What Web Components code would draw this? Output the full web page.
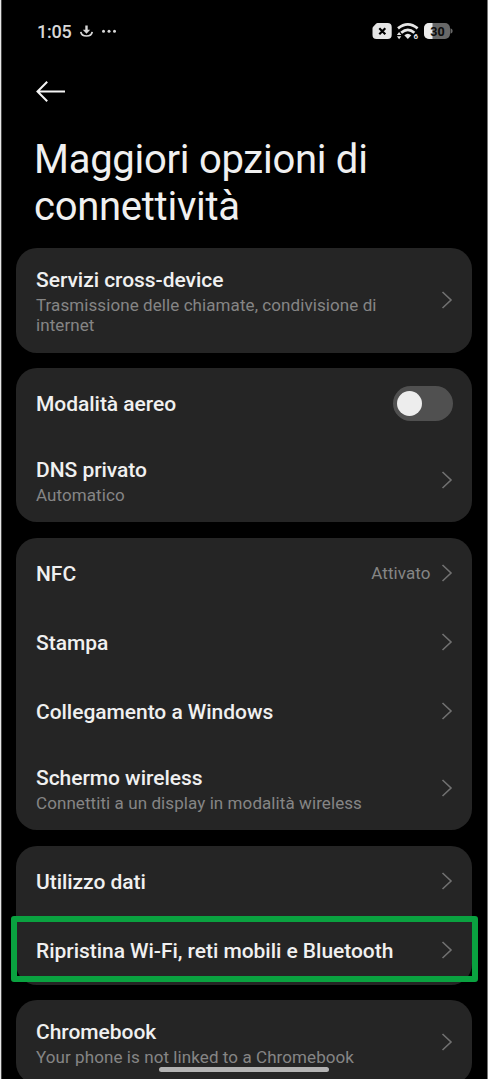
<!DOCTYPE html>
<html lang="it">
<head>
<meta charset="utf-8">
<title>Maggiori opzioni di connettività</title>
<style>
html,body{margin:0;height:100%;overflow:hidden;background:#000}
body{font-family:Roboto,"Noto Sans",sans-serif;color:#f0f0f0}
</style>
</head>
<body>
<phone-screen>
  <status-bar slot="status" time="1:05"></status-bar>
  <page-header slot="header">Maggiori opzioni di connettività</page-header>
  <settings-card>
    <settings-row tall>Servizi cross-device<span slot="sub">Trasmissione delle chiamate, condivisione di internet</span></settings-row>
  </settings-card>
  <settings-card>
    <settings-row>Modalità aereo<toggle-switch slot="end"></toggle-switch></settings-row>
    <settings-row two>DNS privato<span slot="sub">Automatico</span></settings-row>
  </settings-card>
  <settings-card>
    <settings-row>NFC<span slot="value">Attivato</span></settings-row>
    <settings-row>Stampa</settings-row>
    <settings-row>Collegamento a Windows</settings-row>
    <settings-row two>Schermo wireless<span slot="sub">Connettiti a un display in modalità wireless</span></settings-row>
  </settings-card>
  <settings-card>
    <settings-row>Utilizzo dati</settings-row>
    <settings-row marked>Ripristina Wi-Fi, reti mobili e Bluetooth</settings-row>
  </settings-card>
  <settings-card last>
    <settings-row two>Chromebook<span slot="sub">Your phone is not linked to a Chromebook</span></settings-row>
  </settings-card>
</phone-screen>
<script>
function define(name, html) {
  const t = document.createElement('template');
  t.innerHTML = html;
  customElements.define(name, class extends HTMLElement {
    constructor() {
      super();
      this.attachShadow({mode: 'open'}).append(t.content.cloneNode(true));
      const time = this.shadowRoot.querySelector('time');
      if (time) time.textContent = this.getAttribute('time');
    }
  });
}

define('phone-screen', `<style>
:host{display:block;position:relative;box-sizing:border-box;width:488px;height:1079px;overflow:hidden;background:#000;border-left:1px solid #e8e8e8;border-right:1px solid #777;box-shadow:inset 1px 0 #484848;padding:0 15px}
.cards{display:flex;flex-direction:column;gap:15.8px}
.home{position:absolute;left:158px;top:1067px;width:170px;height:5px;border-radius:3px;background:#b3b3b3}
</style><slot name="status"></slot><slot name="header"></slot><div class="cards"><slot></slot></div><div class="home"></div>`);

define('status-bar', `<style>
:host{display:flex;height:62px;align-items:center;padding:0 19px 0 21px;color:#d8d8d8;font-size:18px}
time{font-weight:500;width:35px;line-height:20px;padding-top:1px;letter-spacing:-.2px;white-space:nowrap}
.left{flex:1;display:flex;align-items:center}
svg{display:block;flex:none}
</style><div class="left"><time></time>
<svg width="46" height="20" viewBox="0 0 46 20" fill="none" stroke="#d8d8d8"><path d="M14.5 4.500v6" stroke-width="2.400"/><path d="M10.800 8.800h7.400l-3.700 4z" fill="#d8d8d8" stroke="none"/><path d="M8.800 10.800c.8 5.600 10.600 5.600 11.400 0" stroke-width="1.700"/><g fill="#d8d8d8" stroke="none"><circle cx="31.500" cy="10.300" r="1.500"/><circle cx="37" cy="10.300" r="1.500"/><circle cx="42.500" cy="10.300" r="1.500"/></g></svg></div>
<svg width="81" height="20" viewBox="0 0 81 20"><path d="M5.500 2H15.500Q19.700 2 19.700 6V14Q19.700 18 15.500 18H4.500Q.5 18 .5 14V7.500Q.5 6.500 1.200 5.800L4 2.800Q4.700 2 5.500 2Z" fill="#e6e6e6"/><path d="M7.300 7.200l6 6M13.300 7.200l-6 6" stroke="#000" stroke-width="2.200"/>
<g fill="none" stroke="#e6e6e6" stroke-width="2.700"><path d="M26 7.400Q35.800-.8 45.600 7.400"/><path d="M29.200 11.800Q35.800 5.900 42.400 11.800"/></g><path d="M32.300 14.300Q35.800 11.300 39.300 14.300L35.800 17.900z" fill="#e6e6e6"/><path d="M24.900 13.900l2.200-3 2.200 3zM24.900 15.200h4.400L27.100 18.200z" fill="#e6e6e6"/><text x="41.600" y="18.300" font-family="Roboto,sans-serif" font-size="8" font-weight="700" fill="#e6e6e6">6</text>
<defs><clipPath id="b"><rect x="52" y="2" width="26" height="16" rx="5"/></clipPath></defs><g clip-path="url(#b)"><path d="M52 2h26v16H52z" fill="#686868"/><path d="M52 2h8.500v16H52z" fill="#ececec"/></g><path d="M78.500 7.200Q80.700 8 80.700 10T78.500 12.800z" fill="#686868"/><text x="65.400" y="14.500" text-anchor="middle" font-family="Roboto,sans-serif" font-size="12.500" font-weight="700" fill="#0c0c0c">30</text></svg>`);

define('page-header', `<style>
:host{display:block;height:186px;padding:0 18px}
svg{display:block;margin:0 0 0 2px}
h1{margin:33.300px 0 0;width:360px;font-size:40px;line-height:46.500px;font-weight:400;letter-spacing:-.27px}
.back{padding-top:18px}
</style><div class="back"><svg width="31" height="24" viewBox="0 0 31 24" fill="none" stroke="#f5f5f5" stroke-width="2"><path d="M29 11.500H1.500M11.200 1.800L1.500 11.500l9.700 9.700"/></svg></div><h1><slot></slot></h1>`);

define('settings-card', `<style>
:host{display:block;background:#252525;border-radius:21px}
:host([last]){margin-top:-.900px}
</style><slot></slot>`);

define('chevron-icon', `<style>:host{display:block;flex:none}svg{display:block}</style>
<svg width="12" height="18" viewBox="0 0 12 18" fill="none" stroke="#717171" stroke-width="1.600"><path d="M1.500 1l8.500 8-8.500 8"/></svg>`);

define('toggle-switch', `<style>
:host{display:flex;align-items:center;box-sizing:border-box;width:60px;height:35px;border-radius:18px;background:#505050;padding-left:4.500px;margin-top:.500px}
i{display:block;width:25px;height:25px;border-radius:50%;background:#ededed}
</style><i></i>`);

define('settings-row', `<style>
:host{display:flex;position:relative;align-items:center;box-sizing:border-box;height:69.350px;padding:0 19.500px 0 20px}
:host([two]){height:84.500px}
:host([tall]){height:104.500px}
.text{flex:1;min-width:0;padding-top:3.300px}
:host([two]) .text{padding-top:2.500px}
:host([tall]) .text{padding-top:2px}
.title{font-size:21px;line-height:25px;font-weight:500;letter-spacing:-.04px;white-space:nowrap}
.sub{font-size:17px;line-height:20px;color:#858585;width:360px;letter-spacing:.08px}
:host([two]) .sub,:host([tall]) .sub{margin-top:1.500px}
:host([two]) .sub{margin-top:1.900px}
.value{font-size:17px;letter-spacing:.07px;color:#858585;margin-right:10px}
.mark{display:none}
:host([marked]) .mark{display:block;position:absolute;left:-5.500px;right:-6px;top:.300px;height:66px;box-sizing:border-box;border:6px solid #0aa240;border-radius:3px}
</style><div class="text"><div class="title"><slot></slot></div><div class="sub"><slot name="sub"></slot></div></div><div class="value"><slot name="value"></slot></div><slot name="end"><chevron-icon></chevron-icon></slot><div class="mark"></div>`);
</script>
</body>
</html>
